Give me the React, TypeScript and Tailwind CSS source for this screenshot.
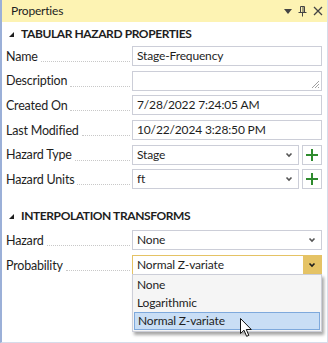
import React from "react";

const font = { fontFamily: 'Lato, "Noto Sans", sans-serif' };

function Label({ text }: { text: string }) {
  return (
    <div className="flex items-end w-[126px] h-full pb-[3px] pr-[2px]">
      <span className="whitespace-nowrap leading-none text-[12.5px] tracking-[-0.2px] text-[#1e1e1e]">{text}</span>
      <span className="flex-1 ml-[3px] mb-[1px] border-b border-dotted border-[#c8c8c8]" />
    </div>
  );
}

function TextBox({ value, resize = false }: { value: string; resize?: boolean }) {
  return (
    <div className="relative flex items-center flex-1 h-full border border-[#ccced8] bg-white px-[4px] text-[12px] tracking-[-0.15px] text-[#1e1e1e]">
      {value}
      {resize && (
        <svg className="absolute right-[1px] bottom-[1px]" width="9" height="9" viewBox="0 0 9 9">
          <path d="M8 1L1 8M8 4L4 8M8 7L7 8" stroke="#a0a0a0" strokeWidth="1" />
        </svg>
      )}
    </div>
  );
}

function Chevron({ color = "#555" }: { color?: string }) {
  return (
    <svg width="8" height="6" viewBox="0 0 8 6">
      <path d="M1.5 1.5L4 4L6.5 1.5" stroke={color} strokeWidth="1.6" fill="none" />
    </svg>
  );
}

function Combo({ value, focused = false }: { value: string; focused?: boolean }) {
  return (
    <div
      className={`flex items-center flex-1 h-full border bg-white text-[12px] tracking-[-0.15px] text-[#1e1e1e] ${
        focused ? "border-[#e5c365]" : "border-[#ccced8]"
      }`}
    >
      <span className="flex-1 px-[4px]">{value}</span>
      <span
        className={`flex items-center justify-center w-[18px] h-full ${focused ? "bg-[#e5c365]" : ""}`}
      >
        <Chevron color={focused ? "#1e1e1e" : "#555"} />
      </span>
    </div>
  );
}

function PlusButton() {
  return (
    <div className="flex items-center justify-center w-[20px] h-full ml-[3px] border border-[#ccced8] bg-white">
      <svg width="14" height="14" viewBox="0 0 14 14">
        <path d="M7 1V13M1 7H13" stroke="#2e8b2e" strokeWidth="2" />
      </svg>
    </div>
  );
}

function Row({ children }: { children: React.ReactNode }) {
  return <div className="flex items-stretch h-[20px] pr-[5px]">{children}</div>;
}

function Section({ title }: { title: string }) {
  return (
    <div className="flex items-center h-[22px] pl-[6px] gap-[6px]">
      <svg width="7" height="7" viewBox="0 0 7 7">
        <path d="M6 1V6H1Z" fill="#1e1e1e" />
      </svg>
      <span className="font-bold text-[12px] text-[#1e1e1e] tracking-[-0.4px]">{title}</span>
    </div>
  );
}

export default function App() {
  return (
    <div
      className="relative w-[328px] h-[343px] flex flex-col bg-white border-l-2 border-r border-b border-l-[#9bb0d8] border-r-[#d6dcea] border-b-[#d6dcea] overflow-hidden"
      style={font}
    >
      {/* title bar */}
      <div className="flex items-center h-[22px] bg-[#fdf3b3] pl-[9px] pr-[4px] shrink-0">
        <span className="flex-1 text-[12px] tracking-[-0.2px] text-[#1e1e1e]">Properties</span>
        <div className="flex items-center gap-[6px] text-[#444]">
          <svg width="8" height="5" viewBox="0 0 8 5">
            <path d="M0 0H8L4 5Z" fill="#444" />
          </svg>
          <svg width="9" height="11" viewBox="0 0 9 11">
            <path d="M2.5 0.5H6.5V6.5H2.5ZM5 1V6M0.5 6.5H8.5M4.5 6.5V10.5" stroke="#444" strokeWidth="1" fill="none" />
          </svg>
          <svg width="10" height="10" viewBox="0 0 10 10">
            <path d="M1 1L9 9M9 1L1 9" stroke="#444" strokeWidth="1.3" />
          </svg>
        </div>
      </div>

      <div className="flex flex-col pt-[1px]">
        <Section title="TABULAR HAZARD PROPERTIES" />
        <div className="flex flex-col gap-[4.7px] pt-[1px] pl-[4px]">
          <Row>
            <Label text="Name" />
            <TextBox value="Stage-Frequency" />
          </Row>
          <Row>
            <Label text="Description" />
            <TextBox value="" resize />
          </Row>
          <Row>
            <Label text="Created On" />
            <TextBox value="7/28/2022 7:24:05 AM" />
          </Row>
          <Row>
            <Label text="Last Modified" />
            <TextBox value="10/22/2024 3:28:50 PM" />
          </Row>
          <Row>
            <Label text="Hazard Type" />
            <Combo value="Stage" />
            <PlusButton />
          </Row>
          <Row>
            <Label text="Hazard Units" />
            <Combo value="ft" />
            <PlusButton />
          </Row>
        </div>

        <div className="mt-[16px]">
          <Section title="INTERPOLATION TRANSFORMS" />
        </div>
        <div className="flex flex-col gap-[5px] pt-[3px] pl-[4px]">
          <Row>
            <Label text="Hazard" />
            <Combo value="None" />
          </Row>
          <Row>
            <Label text="Probability" />
            <Combo value="Normal Z-variate" focused />
          </Row>
        </div>
      </div>

      {/* open dropdown list */}
      <div className="absolute left-[130px] top-[274px] w-[190px] flex flex-col bg-[#f5f5f5] border border-[#ccced8] shadow-[2px_3px_3px_rgba(0,0,0,0.35)] text-[12px] tracking-[-0.15px] text-[#1e1e1e] p-[1px]">
        <div className="h-[18px] flex items-center px-[3px]">None</div>
        <div className="h-[18px] flex items-center px-[3px]">Logarithmic</div>
        <div className="h-[18px] flex items-center px-[3px] bg-[#c9def5] border border-[#7ea9dc]">
          Normal Z-variate
        </div>
      </div>

      {/* mouse cursor */}
      <svg className="absolute left-[238px] top-[318px]" width="13" height="20" viewBox="0 0 13 20">
        <path
          d="M0.5 0.5V15.5L4 12.2L6.6 18.3L8.8 17.4L6.3 11.5H11.3Z"
          fill="#fff"
          stroke="#111"
          strokeWidth="1"
          strokeLinejoin="round"
        />
      </svg>
    </div>
  );
}
